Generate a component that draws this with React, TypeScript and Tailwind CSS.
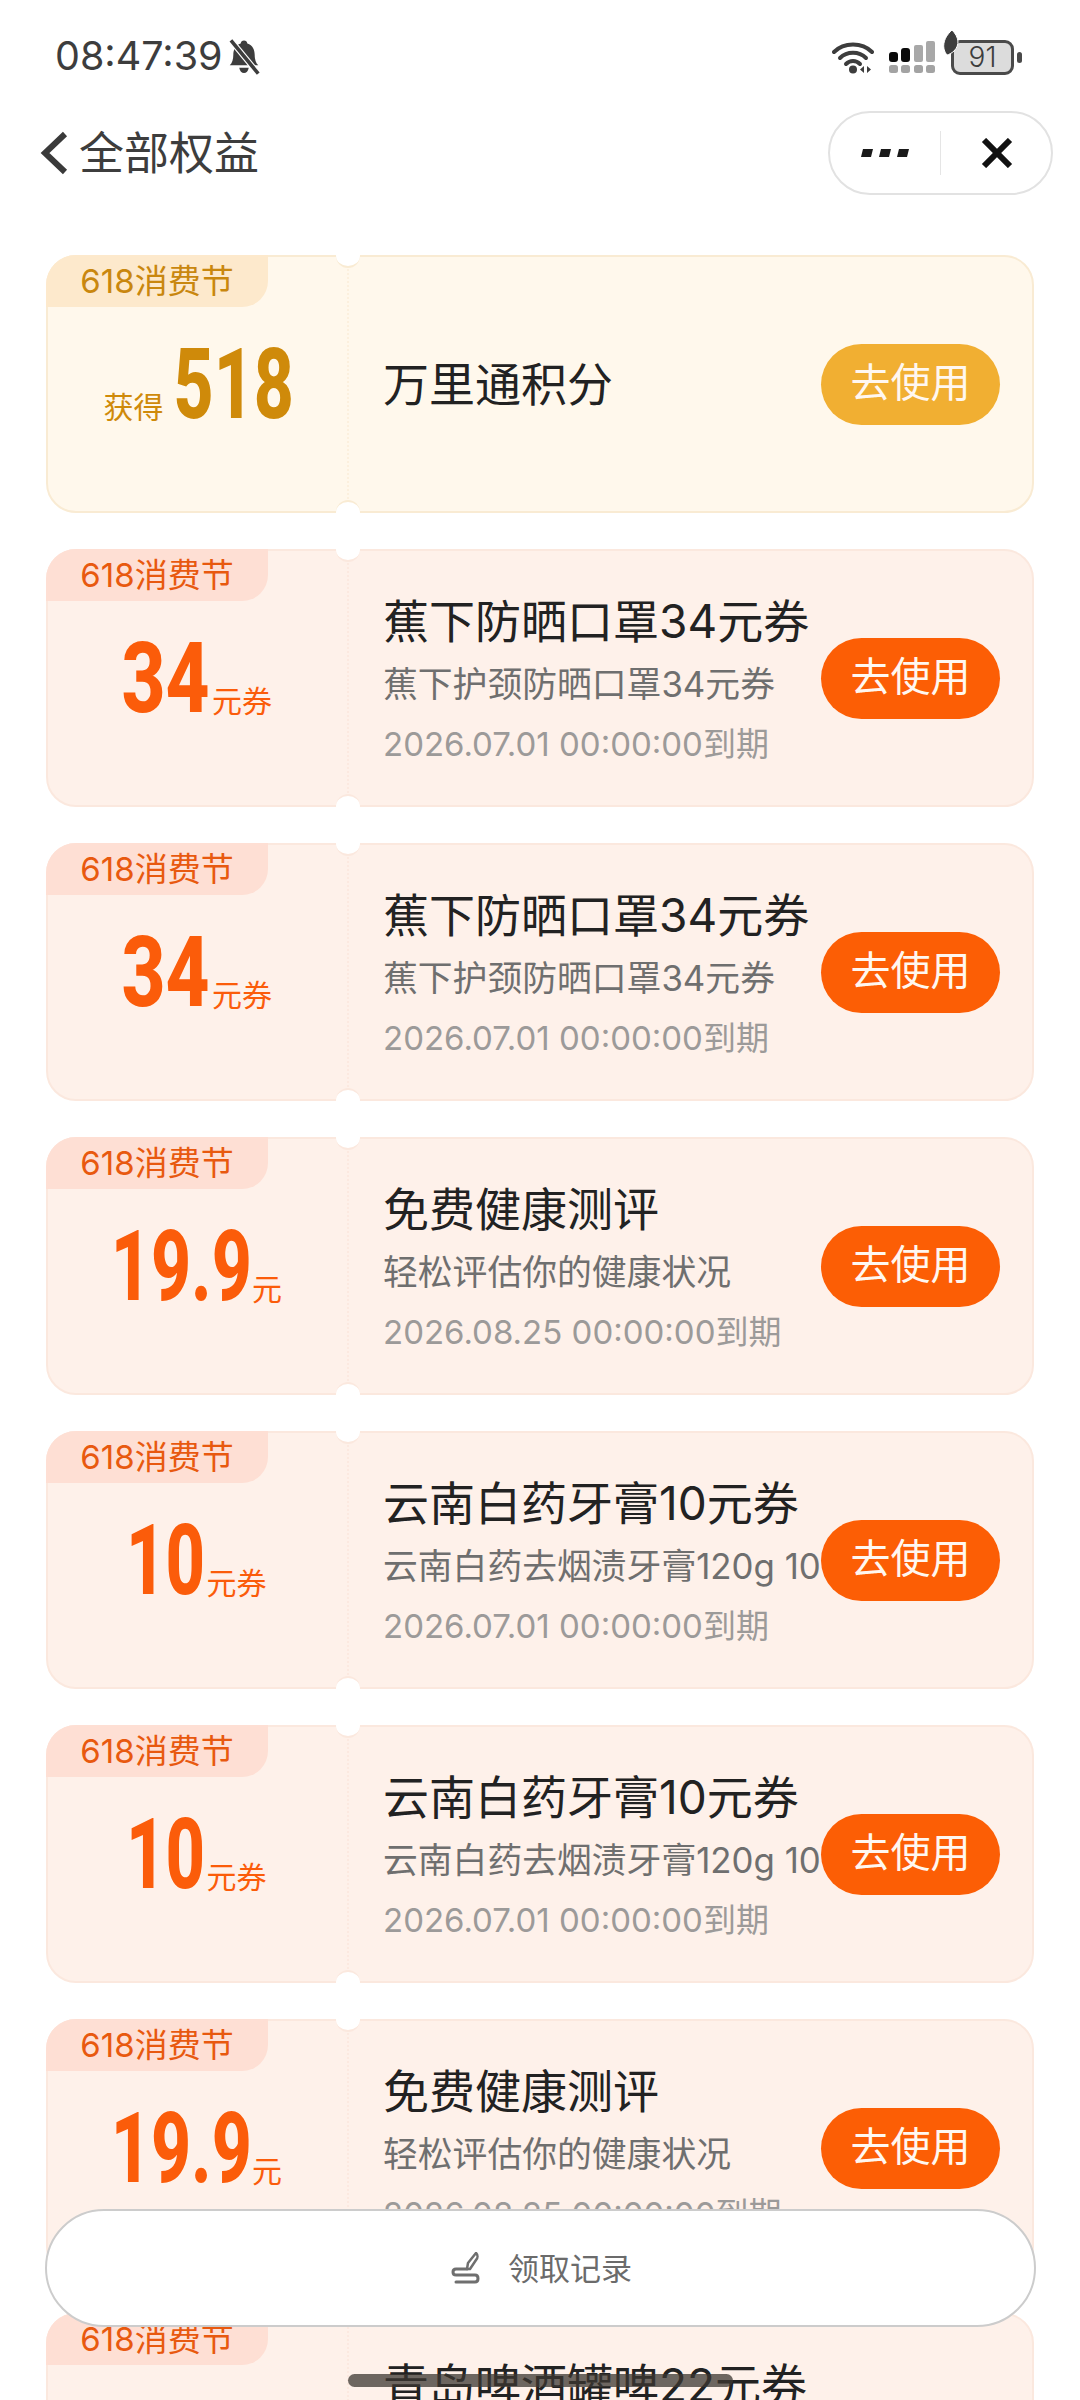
import React from 'react';

type Coupon = {
  amount: string;
  amountWidth: string;
  squeeze: string;
  unit: string;
  title: string;
  desc?: string;
  expires?: string;
  gold?: boolean;
  prefix?: string;
};

const COUPONS: Coupon[] = [
  { amount: '518', amountWidth: 'w-[116px]', squeeze: 'scale-x-[0.71]', unit: '', prefix: '获得', title: '万里通积分', gold: true },
  { amount: '34', amountWidth: 'w-[86px]', squeeze: 'scale-x-[0.78]', unit: '元券', title: '蕉下防晒口罩34元券', desc: '蕉下护颈防晒口罩34元券', expires: '2026.07.01 00:00:00到期' },
  { amount: '34', amountWidth: 'w-[86px]', squeeze: 'scale-x-[0.78]', unit: '元券', title: '蕉下防晒口罩34元券', desc: '蕉下护颈防晒口罩34元券', expires: '2026.07.01 00:00:00到期' },
  { amount: '19.9', amountWidth: 'w-[136px]', squeeze: 'scale-x-[0.71]', unit: '元', title: '免费健康测评', desc: '轻松评估你的健康状况', expires: '2026.08.25 00:00:00到期' },
  { amount: '10', amountWidth: 'w-[75px]', squeeze: 'scale-x-[0.7]', unit: '元券', title: '云南白药牙膏10元券', desc: '云南白药去烟渍牙膏120g 10', expires: '2026.07.01 00:00:00到期' },
  { amount: '10', amountWidth: 'w-[75px]', squeeze: 'scale-x-[0.7]', unit: '元券', title: '云南白药牙膏10元券', desc: '云南白药去烟渍牙膏120g 10', expires: '2026.07.01 00:00:00到期' },
  { amount: '19.9', amountWidth: 'w-[136px]', squeeze: 'scale-x-[0.71]', unit: '元', title: '免费健康测评', desc: '轻松评估你的健康状况', expires: '2026.08.25 00:00:00到期' },
  { amount: '22', amountWidth: 'w-[86px]', squeeze: 'scale-x-[0.78]', unit: '元券', title: '青岛啤酒罐啤22元券', desc: '青岛啤酒罐啤22元券', expires: '2026.07.01 00:00:00到期' },
];

function StatusIcons() {
  return (
    <div className="flex items-center">
      {/* wifi */}
      <svg width="44" height="33" viewBox="0 0 44 33" className="mr-[13px]">
        <g fill="none" stroke="#3d3d3d" strokeWidth="4" strokeLinecap="round">
          <path d="M2 11C12 1 30 1 40 11" />
          <path d="M8 17C15 10 27 10 34 17" />
          <path d="M14 23C18 19 24 19 28 23" />
        </g>
        <circle cx="21" cy="28.500" r="4" fill="#3d3d3d" />
        <path d="M32 25v7l-4-3.500zM35 25v7l4-3.500z" fill="#3d3d3d" />
      </svg>
      {/* signal bars */}
      <svg width="46" height="32" viewBox="0 0 46 32" className="mr-[16px]">
        <rect x="0" y="11" width="9" height="10" rx="3" fill="#0a0a0a" />
        <rect x="12" y="7" width="9" height="14" rx="3" fill="#0a0a0a" />
        <rect x="25" y="4" width="9" height="17" rx="2" fill="#a8a8a8" />
        <rect x="37" y="0" width="9" height="21" rx="2" fill="#a8a8a8" />
        <rect x="0" y="24" width="9" height="8" rx="2.500" fill="#a3a3a3" />
        <rect x="12" y="24" width="9" height="8" rx="2.500" fill="#a3a3a3" />
        <rect x="25" y="24" width="9" height="8" rx="2.500" fill="#a3a3a3" />
        <rect x="37" y="24" width="9" height="8" rx="2.500" fill="#a3a3a3" />
      </svg>
      {/* battery with the leaf badge over its corner */}
      <div className="relative flex items-center gap-[3px]">
        <div className="flex h-[35px] w-[63px] items-center justify-center rounded-[9px] border-[3px] border-[#4a4a4a] bg-[#dcdcdc] text-[28px] font-light leading-none text-[#3d3d3d]">
          91
        </div>
        <div className="h-[11px] w-[5px] rounded-full bg-[#4a4a4a]" />
        <svg width="18" height="26" viewBox="0 0 18 26" className="absolute left-[-9px] top-[-10px]">
          <path d="M10 0C17 7 18 15 12 21C10 23 6 25 5 25C0 19 0 9 10 0Z" fill="#3d3d3d" stroke="#fff" strokeWidth="1" />
        </svg>
      </div>
    </div>
  );
}

function CouponCard({ coupon }: { coupon: Coupon }) {
  const { gold } = coupon;
  const edge = gold ? 'border-[#f9ebd3]' : 'border-[#fbe8de]';
  return (
    <div className={`relative flex h-[258px] shrink-0 rounded-[30px] border-2 ${edge} ${gold ? 'bg-[#fff8ec]' : 'bg-[#fef1ea]'}`}>
      <div
        className={`absolute left-[-2px] top-[-2px] flex h-[52px] w-[222px] items-center justify-center rounded-tl-[30px] rounded-br-[26px] text-[33px] leading-none ${
          gold ? 'bg-[#fde9cc] text-[#c9870f]' : 'bg-[#fedfd4] text-[#e8590f]'
        }`}
      >
        618消费节
      </div>

      {/* punched notches on the tear line */}
      <div className={`absolute left-[288px] top-[-13px] h-[24px] w-[24px] rounded-full border-b-2 bg-white ${edge}`} />
      <div className={`absolute bottom-[-13px] left-[288px] h-[24px] w-[24px] rounded-full border-t-2 bg-white ${edge}`} />

      <div
        className={`flex w-[301px] shrink-0 items-baseline justify-center self-stretch border-r-2 border-dotted pt-[83px] ${
          gold ? 'border-[#fcf0de] text-[#cf8a0a]' : 'border-[#fce9e0] text-[#fb5c0a]'
        }`}
      >
        {coupon.prefix && <span className="mr-[12px] text-[30px] leading-none">{coupon.prefix}</span>}
        {/* condensed numerals: the box keeps the narrow width, the glyphs are squeezed to fit */}
        <span className={`flex justify-center ${coupon.amountWidth}`}>
          <span className={`inline-block whitespace-nowrap font-['Roboto',sans-serif] text-[98px] font-extrabold leading-[90px] ${coupon.squeeze}`}>
            {coupon.amount}
          </span>
        </span>
        {coupon.unit && <span className="ml-[3px] text-[30px] leading-none">{coupon.unit}</span>}
      </div>

      <div className="flex min-w-0 flex-1 items-center pl-[34px] pr-[32px]">
        <div className={`min-w-0 flex-1 overflow-hidden whitespace-nowrap ${coupon.desc ? 'pt-[9px]' : ''}`}>
          <div className="text-[46px] leading-[60px] text-[#222222]">{coupon.title}</div>
          {coupon.desc && <div className="mt-[3px] text-[34.800px] leading-[60px] text-[#6f6f6f]">{coupon.desc}</div>}
          {coupon.expires && <div className="text-[33px] leading-[60px] text-[#9c9a99]">{coupon.expires}</div>}
        </div>
        <button
          className={`flex h-[81px] w-[179px] shrink-0 items-center justify-center rounded-full pb-[2px] text-[40px] leading-none text-[#fff7f0] ${
            gold ? 'bg-[#f1af32]' : 'bg-[#fc5e05]'
          }`}
        >
          去使用
        </button>
      </div>
    </div>
  );
}

export default function App() {
  return (
    <div className="relative h-[2400px] w-[1080px] overflow-hidden bg-white font-['Inter','Noto_Sans_CJK_SC',sans-serif]">
      <div className="flex h-[111px] items-center justify-between pl-[55px] pr-[58px] pt-[3px]">
        <div className="flex items-center">
          <span className="text-[39.500px] leading-none text-[#3d3d3d]">08:47:39</span>
          <svg width="38" height="38" viewBox="0 0 32 32" className="ml-[2px]">
            <path d="M16 2c1.600 0 2.600 1 2.800 2.600C23.400 6 25 10 25 14c0 4 1 7 3 9H4c2-2 3-5 3-9 0-4 1.600-8 6.200-9.400C13.400 3 14.400 2 16 2Z" fill="#3d3d3d" />
            <path d="M12 25h8c-.5 3-2 4.500-4 4.500S12.500 28 12 25Z" fill="#3d3d3d" />
            <path d="M5 2l23 28" stroke="#fff" strokeWidth="5" />
            <path d="M5 2l23 28" stroke="#3d3d3d" strokeWidth="3" />
          </svg>
        </div>
        <StatusIcons />
      </div>

      <div className="flex h-[84px] items-center justify-between pl-[38px] pr-[27px]">
        <div className="flex items-center">
          <svg width="32" height="44" viewBox="0 0 32 44">
            <path d="M27 3L7 22l20 19" fill="none" stroke="#3a3a3a" strokeWidth="6" />
          </svg>
          <span className="ml-[9px] text-[45px] leading-none text-[#3d3d3d]">全部权益</span>
        </div>
        <div className="flex h-[84px] w-[225px] items-center rounded-full border-2 border-[#e2e2e2] bg-white">
          <svg width="48" height="10" viewBox="0 0 48 10" className="ml-[31px]">
            <path d="M2 1h10l-2 8H0zM20 1h10l-2 8H18zM38 1h10l-2 8H36z" fill="#1a1a1a" />
          </svg>
          <div className="ml-[31px] h-[44px] w-px bg-[#e5e5e5]" />
          <svg width="32" height="30" viewBox="0 0 32 30" className="ml-[40px]">
            <path d="M3 2l26 26M29 2L3 28" fill="none" stroke="#111111" strokeWidth="6" />
          </svg>
        </div>
      </div>

      <div className="mt-[60px] flex flex-col gap-[36px] px-[46px]">
        {COUPONS.map((coupon, i) => (
          <CouponCard key={i} coupon={coupon} />
        ))}
      </div>

      {/* floating record button */}
      <div className="absolute left-[45px] top-[2209px] flex h-[118px] w-[991px] items-center justify-center rounded-full border-2 border-[#cccccc] bg-white">
        <svg width="34" height="32" viewBox="0 0 34 32">
          <path d="M27 1c2 2 2 5 0 7l-6 9h-3l1-6 8-10Z" fill="none" stroke="#6f6f6f" strokeWidth="2.500" strokeLinejoin="round" />
          <path d="M18 17H7c-4 0-4 6 0 6h19c4 0 4 7 0 7H7" fill="none" stroke="#6f6f6f" strokeWidth="3" strokeLinecap="round" />
        </svg>
        <span className="ml-[25px] text-[31px] leading-none text-[#6b6b6b]">领取记录</span>
      </div>

      <div className="absolute left-[348px] top-[2374px] h-[13px] w-[385px] rounded-full bg-[#3c3732]/75" />
    </div>
  );
}
